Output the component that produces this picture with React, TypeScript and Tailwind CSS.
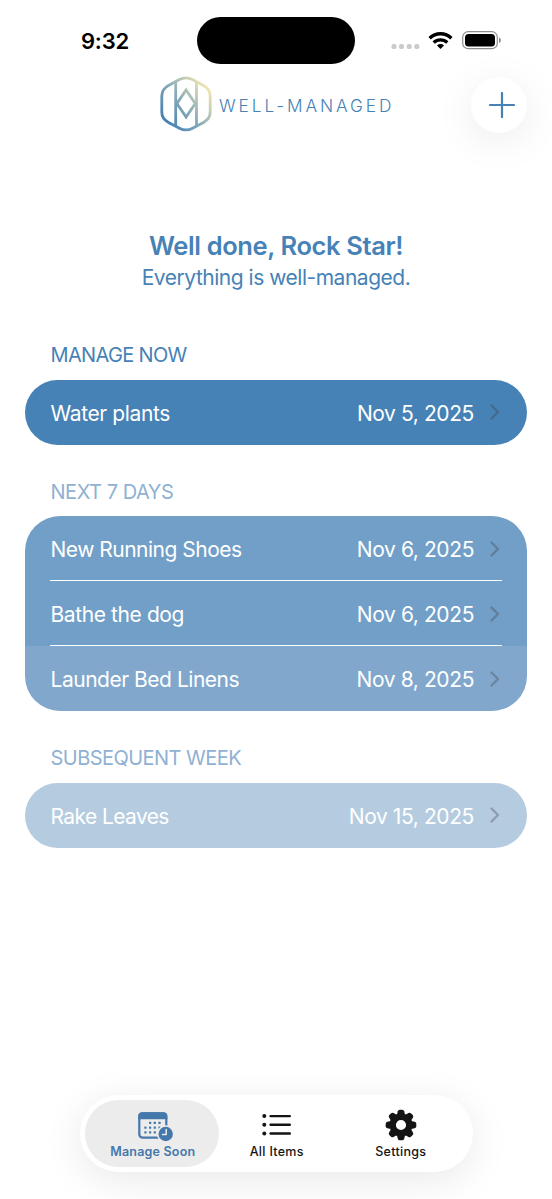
import type { ReactNode } from "react";

type Item = { name: string; date: string; tone: string; fit: string };
type Group = { title: string; titleTone: string; gap: string; shape: string; items: Item[] };

const groups: Group[] = [
  {
    title: "MANAGE NOW",
    titleTone: "text-[#4682b6] tracking-[-0.66px]",
    gap: "mt-[47px]",
    shape: "rounded-[32.5px]",
    items: [{ name: "Water plants", date: "Nov 5, 2025", tone: "bg-[#4682b6]", fit: "tracking-[-0.38px]" }],
  },
  {
    title: "NEXT 7 DAYS",
    titleTone: "text-[#8fb1d3] tracking-[-0.46px]",
    gap: "mt-[32px]",
    shape: "rounded-[35px]",
    items: [
      { name: "New Running Shoes", date: "Nov 6, 2025", tone: "bg-[#729fc7]", fit: "tracking-[-0.5px]" },
      { name: "Bathe the dog", date: "Nov 6, 2025", tone: "bg-[#729fc7]", fit: "tracking-[-0.4px]" },
      { name: "Launder Bed Linens", date: "Nov 8, 2025", tone: "bg-[#81a8cc]", fit: "tracking-[-0.48px]" },
    ],
  },
  {
    title: "SUBSEQUENT WEEK",
    titleTone: "text-[#8fb1d3] tracking-[-0.54px]",
    gap: "mt-[32px]",
    shape: "rounded-[32.5px]",
    items: [{ name: "Rake Leaves", date: "Nov 15, 2025", tone: "bg-[#b5cce0]", fit: "tracking-[-0.6px]" }],
  },
];

function StatusBar() {
  return (
    <div className="flex h-[77px] items-start pt-[17px]">
      <div className="flex h-[48px] w-[197px] items-center pl-[81px] text-[22px] font-semibold tracking-[-0.2px] text-black">
        9:32
      </div>
      <div className="h-[47px] w-[158px] rounded-full bg-black" />
      <svg className="ml-[36px] mt-[11px]" width="112" height="26" viewBox="391 28 112 26">
        <g fill="#cbcbcb">
          <rect x="391.5" y="44" width="5" height="5" rx="1.8" />
          <rect x="399" y="44" width="5" height="5" rx="1.8" />
          <rect x="406.7" y="44" width="5" height="5" rx="1.8" />
          <rect x="414.3" y="44" width="5" height="5" rx="1.8" />
        </g>
        <g fill="none" stroke="#000" strokeWidth="3.3">
          <path d="M429.6 38.2a15.6 15.6 0 0 1 21.8 0" />
          <path d="M433.7 42.5a9.9 9.9 0 0 1 13.6 0" />
        </g>
        <path d="M440.5 49l-3.5-3.6a5 5 0 0 1 7 0z" fill="#000" />
        <rect x="462.7" y="31.7" width="34.6" height="17" rx="5.5" fill="none" stroke="#8c8c8c" strokeWidth="1.2" />
        <rect x="465" y="34" width="30" height="12.5" rx="3.5" fill="#000" />
        <path d="M499 37.5c2.5.8 2.5 4.7 0 5.5z" fill="#8c8c8c" />
      </svg>
    </div>
  );
}

function Logo() {
  return (
    <svg className="-mt-[3px]" width="52" height="56" viewBox="160 76 52 56" fill="none" stroke="url(#logo)" strokeWidth="2.8" strokeLinejoin="round">
      <defs>
        <linearGradient id="logo" gradientUnits="userSpaceOnUse" x1="168" y1="122" x2="208" y2="90">
          <stop offset="0" stopColor="#4682b6" />
          <stop offset="0.5" stopColor="#8eafb8" />
          <stop offset="1" stopColor="#ece2b2" />
        </linearGradient>
      </defs>
      <path d="M179.5 79.6Q186 76.2 192.5 79.6L203.5 85.4Q210.2 89 210.2 96V112Q210.2 119 203.5 122.4L192.5 128.2Q186 131.6 179.5 128.2L168.5 122.4Q161.8 119 161.8 112V96Q161.8 89 168.5 85.4Z" />
      <path d="M175.7 82V126M196.5 82V126" />
      <path d="M186.1 90L195.3 103.5L186.1 117L176.9 103.5Z" strokeLinejoin="miter" />
    </svg>
  );
}

function Header() {
  return (
    <header className="flex h-[56px] items-start">
      <div className="ml-[160px] flex h-[56px] w-[311px] items-center gap-[7px]">
        <Logo />
        <span className="mt-[2px] whitespace-nowrap text-[17.3px] font-light tracking-[2.9px] text-[#4682b6]">WELL-MANAGED</span>
      </div>
      <button className="flex size-[56px] items-center justify-center rounded-full bg-white shadow-[0_8px_40px_rgba(0,0,0,0.08)]" aria-label="Add">
        <svg className="ml-[6px]" width="26" height="26" viewBox="0 0 26 26" stroke="#4682b6" strokeWidth="2.2" strokeLinecap="round">
          <path d="M1 13H25M13 1V25" />
        </svg>
      </button>
    </header>
  );
}

function Section({ group }: { group: Group }) {
  return (
    <section className={group.gap}>
      <h2 className={`flex h-[30px] items-center pl-[25.5px] text-[20px] ${group.titleTone}`}>{group.title}</h2>
      <ul className={`mt-[9.5px] overflow-hidden ${group.shape}`}>
        {group.items.map((item, i) => (
          <li key={item.name} className={`h-[65px] px-[25px] ${item.tone}`}>
            <div
              className={`flex h-[65px] items-center pl-[0.5px] text-[21px] text-white ${
                i < group.items.length - 1 ? "border-b border-white pt-[4px]" : "pt-[3px]"
              }`}
            >
              <span className={`flex-1 ${item.fit}`}>{item.name}</span>
              <span className="tracking-[-0.4px]">{item.date}</span>
              <svg className="-mt-[3px] ml-[16px] mr-[2px]" width="10" height="16" viewBox="0 0 10 16" fill="none" stroke="#3c3c43" strokeOpacity="0.32" strokeWidth="2.4" strokeLinecap="round" strokeLinejoin="round">
                <path d="M1.5 1.5L8 8L1.5 14.5" />
              </svg>
            </div>
          </li>
        ))}
      </ul>
    </section>
  );
}

const calendarDays = [
  [11, 9.8], [15.7, 9.8], [20.4, 9.8],
  [6.3, 14.5], [11, 14.5], [15.7, 14.5], [20.4, 14.5],
  [6.3, 19.2], [11, 19.2], [15.7, 19.2],
];

function CalendarIcon() {
  return (
    <svg className="ml-[7px] mt-[3px]" width="36" height="30" viewBox="0 0 36 30">
      <rect x="1.3" y="1.3" width="27" height="24.4" rx="3.5" fill="none" stroke="#4478ab" strokeWidth="2.2" />
      <path d="M0.2 7.2V4Q0.2 0.2 4 0.2H25.6Q29.4 0.2 29.4 4V7.2Z" fill="#4478ab" />
      <g fill="#4478ab">
        {calendarDays.map(([x, y]) => (
          <rect key={`${x}-${y}`} x={x} y={y} width="2.2" height="2.2" rx="0.5" />
        ))}
      </g>
      <circle cx="27.7" cy="22" r="8.8" fill="#ececec" />
      <circle cx="27.7" cy="22" r="7.2" fill="#4478ab" />
      <path d="M28.2 17.6V22.5H24.5" fill="none" stroke="#ececec" strokeWidth="1.5" strokeLinecap="round" strokeLinejoin="round" />
    </svg>
  );
}

function ListIcon() {
  return (
    <svg className="ml-px" width="30" height="30" viewBox="0 0 30 30" fill="#141414">
      {[6.1, 14.8, 23.5].map((y) => (
        <g key={y}>
          <circle cx="2.3" cy={y} r="2" />
          <rect x="7.4" y={y - 1.2} width="21.6" height="2.4" rx="1.2" />
        </g>
      ))}
    </svg>
  );
}

function GearIcon() {
  return (
    <svg className="ml-[2px]" width="32" height="32" viewBox="-16 -16 32 32">
      <circle r="8.3" fill="none" stroke="#141414" strokeWidth="6.4" />
      {[0, 45, 90, 135, 180, 225, 270, 315].map((a) => (
        <path key={a} transform={`rotate(${a})`} d="M-4.1 -10L-3.2 -13.7Q-2.8 -15.3 -1.3 -15.3H1.3Q2.8 -15.3 3.2 -13.7L4.1 -10Z" fill="#141414" />
      ))}
    </svg>
  );
}

function Tab({ icon, label, active = false }: { icon: ReactNode; label: string; active?: boolean }) {
  return (
    <button
      className={`flex h-[67px] w-[134px] flex-col items-center rounded-full pt-[9px] text-[12.5px] leading-[16px] ${
        active ? "bg-[#ececec] font-semibold tracking-[0.2px] text-[#4478ab]" : "-ml-[10px] font-medium tracking-[0.3px] text-[#141414]"
      }`}
    >
      <span className="flex h-[32px] items-center justify-center">{icon}</span>
      <span className="ml-[1.5px] mt-[3px]">{label}</span>
    </button>
  );
}

export default function App() {
  return (
    <div className="flex h-[1199px] w-[552px] flex-col overflow-hidden bg-white font-['Inter',sans-serif]">
      <StatusBar />
      <Header />
      <main className="flex-1 px-[25px]">
        <div className="pt-[96px] text-center text-[#4682b6]">
          <h1 className="text-[25.5px] font-semibold leading-[34px] tracking-[-0.38px]">Well done, Rock Star!</h1>
          <p className="text-[21px] leading-[30px] tracking-[-0.48px]">Everything is well-managed.</p>
        </div>
        {groups.map((group) => (
          <Section key={group.title} group={group} />
        ))}
      </main>
      <nav className="mb-[27px] ml-[80px] flex h-[77px] w-[393px] rounded-full bg-white p-[5px] shadow-[0_8px_40px_rgba(0,0,0,0.09)]">
        <Tab icon={<CalendarIcon />} label="Manage Soon" active />
        <Tab icon={<ListIcon />} label="All Items" />
        <Tab icon={<GearIcon />} label="Settings" />
      </nav>
    </div>
  );
}
